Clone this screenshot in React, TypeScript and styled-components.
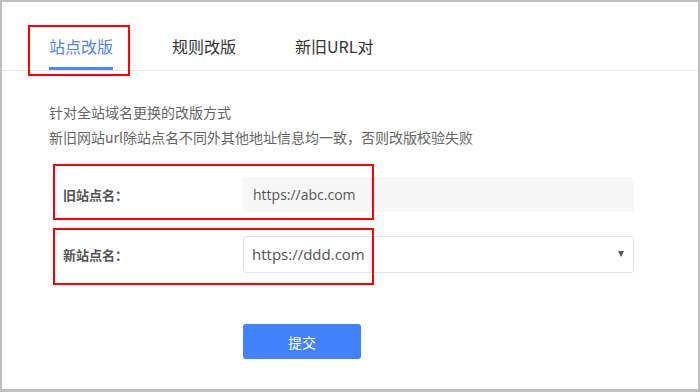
import React from 'react';
import styled, { createGlobalStyle } from 'styled-components';

const GlobalStyle = createGlobalStyle`
  html, body {
    margin: 0;
    padding: 0;
    background: #ffffff;
  }
  body {
    font-family: "Open Sans", "Noto Sans CJK SC", sans-serif;
  }
`;

// frame
const Frame = styled.div`
  box-sizing: border-box;
  width: 700px;
  height: 392px;
  border: 2px solid #bfbfbf;
  border-bottom-width: 3px;
  background: #fff;
  overflow: hidden;
`;

// tabs
const TabBar = styled.div`
  display: flex;
  gap: 59px;
  height: 68px;
  padding-left: 47px;
  border-bottom: 1px solid #e8e8e8;
`;

const Tab = styled.div<{ $active?: boolean }>`
  position: relative;
  box-sizing: border-box;
  height: 68px;
  padding-top: 32px;
  line-height: 24px;
  font-size: 16px;
  font-family: "Noto Sans CJK SC", sans-serif;
  color: ${(p) => (p.$active ? '#4a86f5' : '#333')};
  border-bottom: 3px solid ${(p) => (p.$active ? '#4a86f5' : 'transparent')};
  white-space: nowrap;
`;

// annotation box drawn over the content
const Mark = styled.div<{ $l: number; $t: number; $w: number; $h: number }>`
  position: absolute;
  left: ${(p) => p.$l}px;
  top: ${(p) => p.$t}px;
  width: ${(p) => p.$w}px;
  height: ${(p) => p.$h}px;
  box-sizing: border-box;
  border: 2px solid #ff0000;
  pointer-events: none;
  z-index: 2;
`;

const Content = styled.div`
  padding: 29px 0 0 47px;
`;

const Desc = styled.p`
  margin: 0;
  font-size: 14px;
  line-height: 25px;
  color: #666;
  font-family: "Noto Sans CJK SC", sans-serif;
`;

const Form = styled.div`
  margin-top: 14px;
`;

const Row = styled.div`
  position: relative;
  display: flex;
  align-items: center;
  height: 60px;
  padding-left: 14px;
`;

const Label = styled.div`
  width: 180px;
  font-size: 13px;
  font-weight: bold;
  color: #555;
  font-family: "Noto Sans CJK SC", sans-serif;
`;

const ReadOnlyInput = styled.div`
  box-sizing: border-box;
  width: 391px;
  height: 35px;
  line-height: 35px;
  padding-left: 10px;
  border-radius: 3px;
  background: #f7f7f7;
  font-size: 14px;
  color: #555;
`;

const Select = styled.div`
  box-sizing: border-box;
  display: flex;
  align-items: center;
  justify-content: space-between;
  width: 391px;
  height: 37px;
  padding: 0 8px;
  border: 1px solid #e2e2e2;
  border-radius: 3px;
  background: #fff;
  font-size: 15px;
  color: #555;
`;

const Arrow = styled.span`
  width: 0;
  height: 0;
  margin-right: 1px;
  border-left: 3px solid transparent;
  border-right: 3px solid transparent;
  border-top: 6px solid #555;
`;

const Submit = styled.button`
  display: block;
  width: 118px;
  height: 35px;
  margin: 40px 0 0 194px;
  border: none;
  border-radius: 3px;
  background: #4282fc;
  color: #fff;
  font-size: 14px;
  font-family: "Noto Sans CJK SC", sans-serif;
  cursor: pointer;
`;

const tabs = ['站点改版', '规则改版', '新旧URL对'];

const App: React.FC = () => {
  return (
    <>
      <GlobalStyle />
      <Frame>
        <TabBar>
          {tabs.map((t, i) => (
            <Tab key={t} $active={i === 0}>
              {t}
              {i === 0 && <Mark $l={-21} $t={23} $w={102} $h={51} />}
            </Tab>
          ))}
        </TabBar>
        <Content>
          <Desc>针对全站域名更换的改版方式</Desc>
          <Desc>新旧网站url除站点名不同外其他地址信息均一致，否则改版校验失败</Desc>
          <Form>
            <Row>
              <Mark $l={4} $t={0} $w={321} $h={56} />
              <Label>旧站点名：</Label>
              <ReadOnlyInput>https://abc.com</ReadOnlyInput>
            </Row>
            <Row>
              <Mark $l={4} $t={4} $w={321} $h={57} />
              <Label>新站点名：</Label>
              <Select>
                <span>https://ddd.com</span>
                <Arrow />
              </Select>
            </Row>
          </Form>
          <Submit type="button">提交</Submit>
        </Content>
      </Frame>
    </>
  );
};

export default App;
